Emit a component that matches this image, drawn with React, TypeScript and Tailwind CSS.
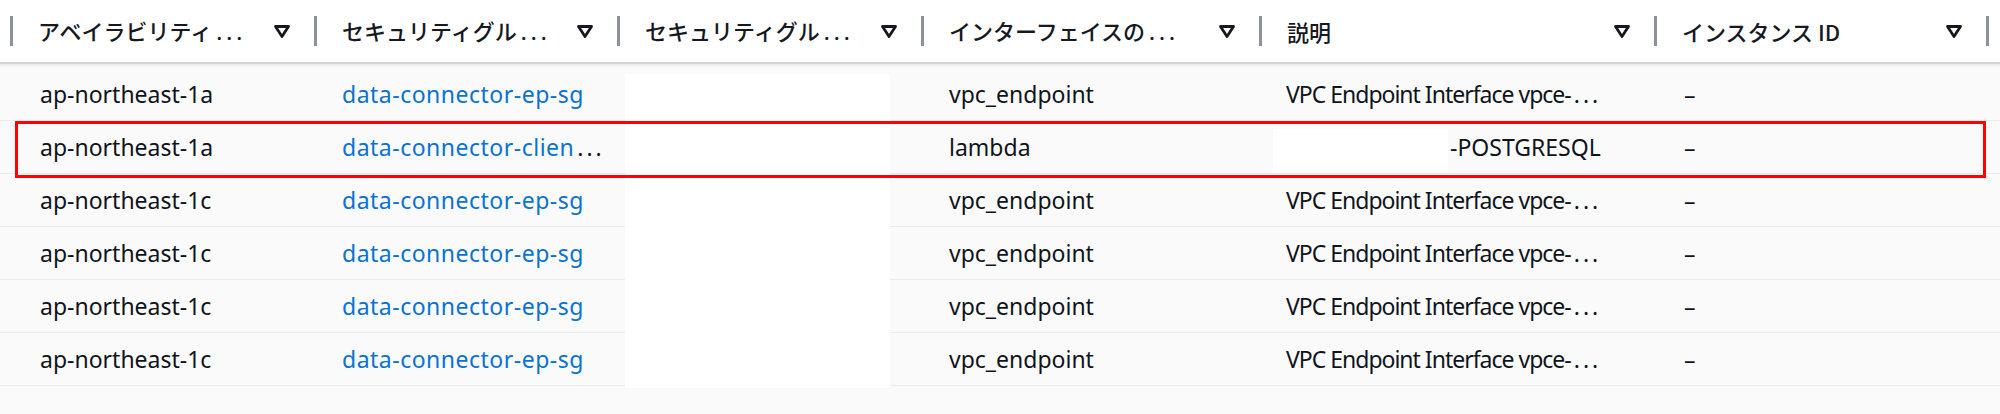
import React from 'react';

const columns = [
  { w: 'w-[304px]', label: 'アベイラビリティ', cut: true },
  { w: 'w-[303px]', label: 'セキュリティグル', cut: true },
  { w: 'w-[304px]', label: 'セキュリティグル', cut: true },
  { w: 'w-[338px]', label: 'インターフェイスの', cut: true },
  { w: 'w-[395px]', label: '説明', cut: false },
  { w: 'w-[332px]', label: 'インスタンス ID', cut: false },
];

const rows = [
  { az: 'ap-northeast-1a', sg: 'data-connector-ep-sg', sgCut: false, type: 'vpc_endpoint', desc: 'VPC Endpoint Interface vpce-', descCut: true },
  { az: 'ap-northeast-1a', sg: 'data-connector-clien', sgCut: true, type: 'lambda', desc: '-POSTGRESQL', descCut: false, masked: true },
  { az: 'ap-northeast-1c', sg: 'data-connector-ep-sg', sgCut: false, type: 'vpc_endpoint', desc: 'VPC Endpoint Interface vpce-', descCut: true },
  { az: 'ap-northeast-1c', sg: 'data-connector-ep-sg', sgCut: false, type: 'vpc_endpoint', desc: 'VPC Endpoint Interface vpce-', descCut: true },
  { az: 'ap-northeast-1c', sg: 'data-connector-ep-sg', sgCut: false, type: 'vpc_endpoint', desc: 'VPC Endpoint Interface vpce-', descCut: true },
  { az: 'ap-northeast-1c', sg: 'data-connector-ep-sg', sgCut: false, type: 'vpc_endpoint', desc: 'VPC Endpoint Interface vpce-', descCut: true },
];

const SortIcon = () => (
  <svg width="18" height="15" viewBox="0 0 18 15" className="shrink-0">
    <polygon points="2.5,2.5 15.5,2.5 9,12.5" fill="#fff" stroke="#16191f" strokeWidth="2.8" strokeLinejoin="round" />
  </svg>
);

const Divider = () => <span className="w-[3px] h-[30px] bg-[#8d9199] shrink-0" />;

// truncated text ends with wide-set dots, as in the console
const HeadDots = () => (
  <span className="ml-[4px] tracking-[4px] font-['Noto_Sans',sans-serif]">...</span>
);
const CellDots = () => (
  <span className="ml-[3px] tracking-[3px] text-[#0f141a]">...</span>
);

const App = () => {
  return (
    <div className="relative w-[2000px] h-[414px] overflow-hidden bg-[#fafafa] font-['Noto_Sans','Noto_Sans_CJK_JP',sans-serif] text-[#0f141a]">
      {/* Header */}
      <div className="flex h-[64px] bg-white border-b-2 border-[#d1d5db]">
        <div className="w-[10px] shrink-0" />
        {columns.map((col, i) => (
          <div key={i} className={`${col.w} shrink-0 flex items-center`}>
            <Divider />
            <span className="ml-[25px] flex-1 whitespace-nowrap overflow-hidden text-[22px] font-medium text-[#16191f] font-['Noto_Sans_CJK_JP','Noto_Sans',sans-serif]">
              {col.label}
              {col.cut && <HeadDots />}
            </span>
            <SortIcon />
            <span className="w-[23px] shrink-0" />
          </div>
        ))}
        <div className="flex items-center">
          <Divider />
        </div>
      </div>
      <div className="h-[4px] bg-gradient-to-b from-[#e6e8eb] to-[#fafafa]" />

      {/* Rows */}
      {rows.map((row, i) => (
        <div key={i} className="flex items-center h-[53px] border-b border-[#e9ebed] text-[23px] whitespace-nowrap">
          <div className="w-[10px] shrink-0" />
          <div className="w-[304px] shrink-0 pl-[30px] overflow-hidden">{row.az}</div>
          <div className="w-[303px] shrink-0 pl-[28px] overflow-hidden">
            <span className="text-[#0972d3] tracking-[0.5px]">{row.sg}</span>
            {row.sgCut && <CellDots />}
          </div>
          <div className="w-[304px] shrink-0" />
          <div className="w-[338px] shrink-0 pl-[28px] overflow-hidden">{row.type}</div>
          <div className={`w-[395px] shrink-0 overflow-hidden ${row.masked ? 'pl-[191px]' : 'pl-[27px]'}`}>
            <span className={row.masked ? '' : 'tracking-[-1px]'}>{row.desc}</span>
            {row.descCut && <CellDots />}
          </div>
          <div className="w-[332px] shrink-0 pl-[30px]">–</div>
        </div>
      ))}

      {/* Redaction boxes */}
      <div className="absolute left-[625px] top-[74px] w-[265px] h-[314px] bg-white" />
      <div className="absolute left-[1273px] top-[129px] w-[175px] h-[44px] bg-white" />

      {/* Highlight */}
      <div className="absolute left-[15px] top-[121px] w-[1971px] h-[57px] border-[3px] border-[#ff0000]" />
    </div>
  );
};

export default App;
